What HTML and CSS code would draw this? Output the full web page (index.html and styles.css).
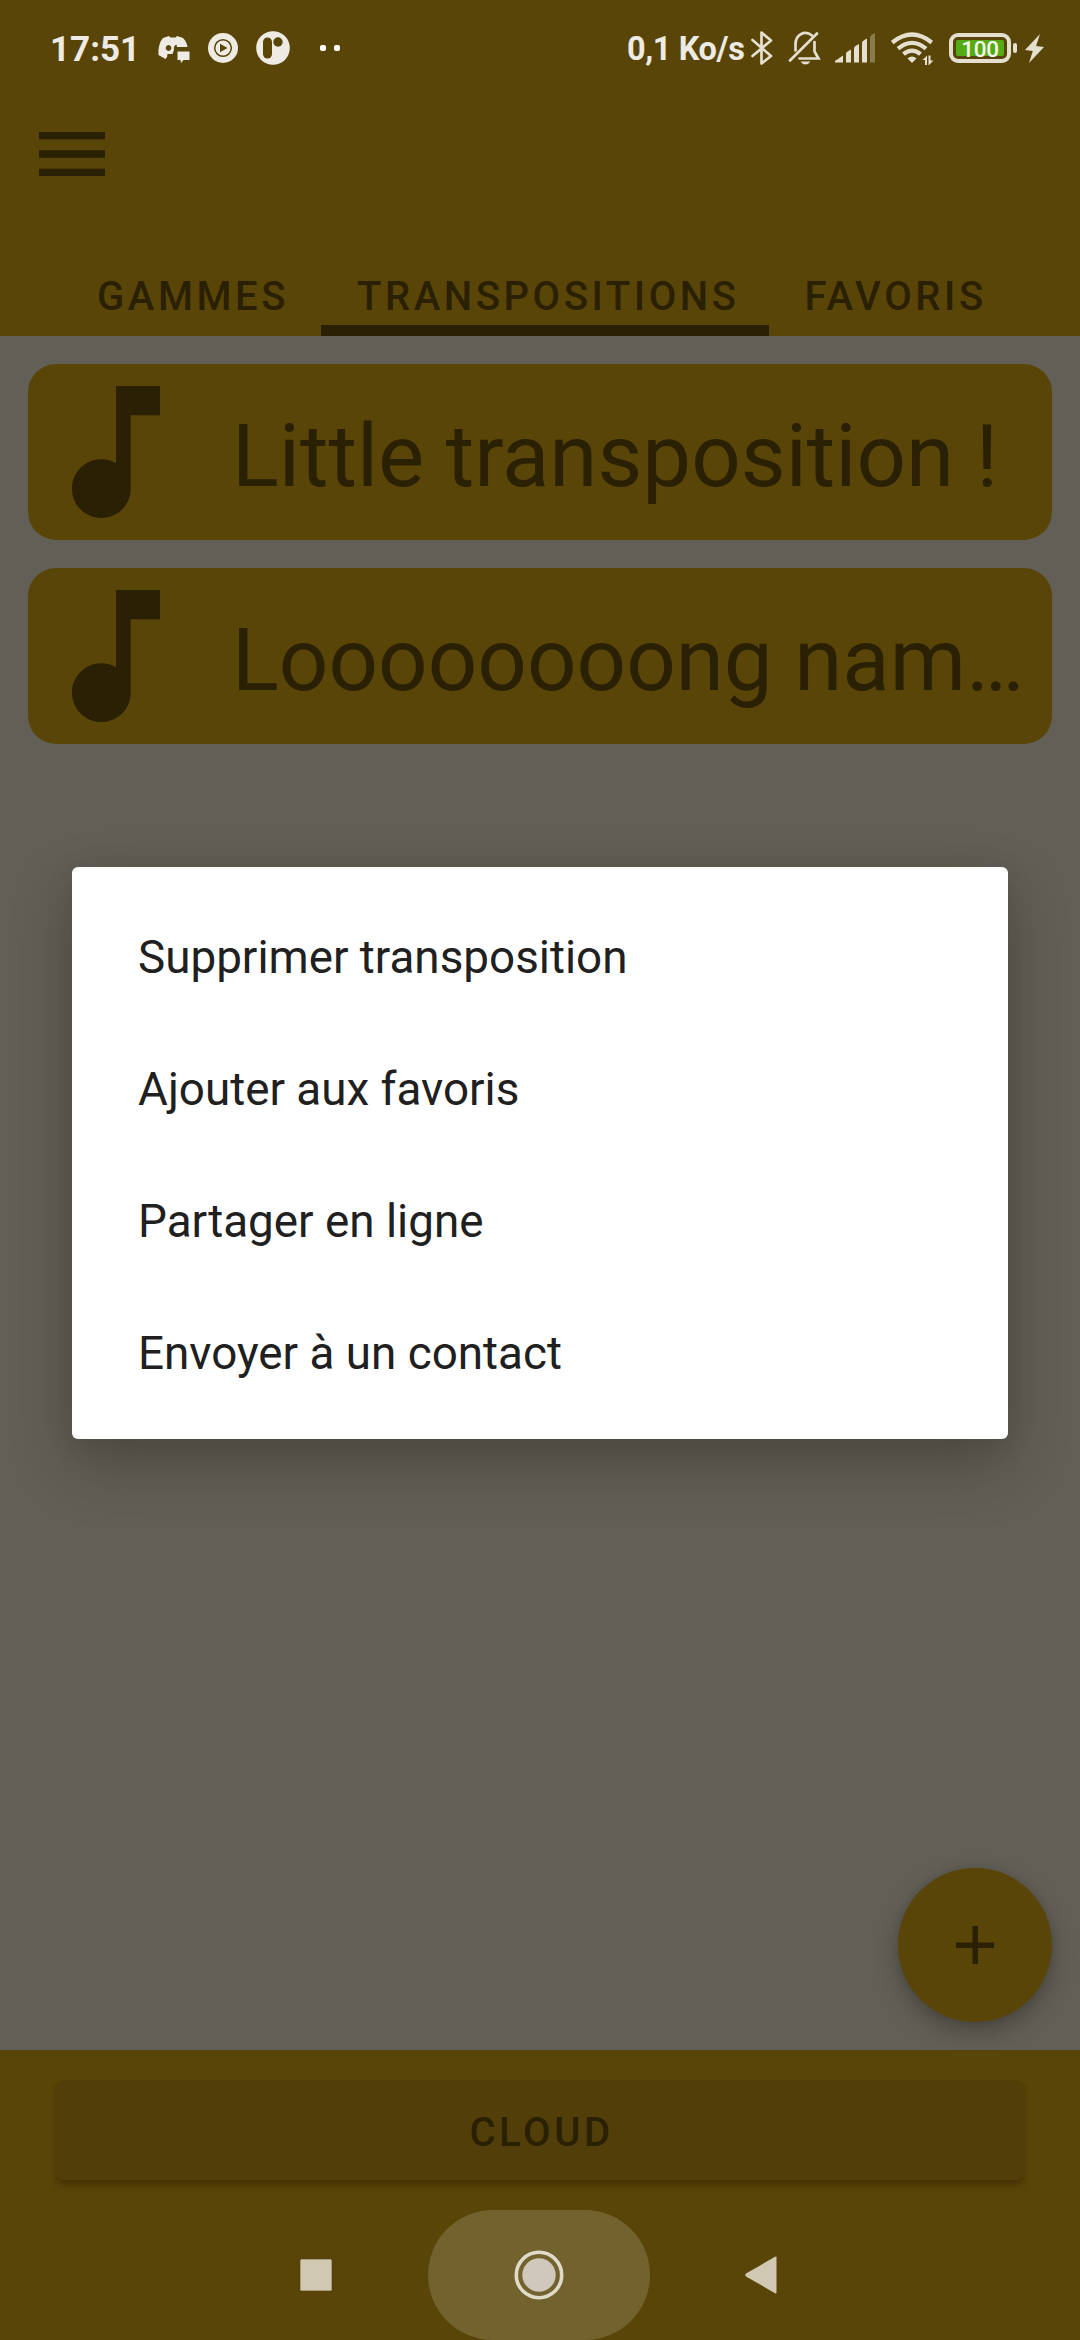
FILE: index.html
```html
<!DOCTYPE html>
<html lang="fr">
<head>
<meta charset="utf-8">
<title>Transpositions</title>
<link rel="stylesheet" href="styles.css">
</head>
<body>
<div class="screen">
  <header class="header">
    <div class="status">
      <span class="clock">17:51</span>
      <svg class="ic-discord" width="32" height="28" viewBox="0 0 32 28">
        <path fill="currentColor" fill-rule="evenodd" d="M5 3 L11 1 L12.500 2.500 H17.500 L19 1 L25 3 C28 6 29 9 29.500 12 H19 L18.500 9.500 C16.500 10 15.500 12 16 15 L14.500 19 H9.500 L9 22 L7.500 24 L0.500 20 C0 13 1.500 7 5 3 Z M10.500 10 a2.800 3 0 1 0 .1 0 Z"/>
        <path fill="currentColor" d="M19.500 16.500 H31.500 V25 H25.500 L23 28 L22.500 25 H19.500 Z"/>
      </svg>
      <svg class="ic-music" width="30" height="30" viewBox="0 0 30 30">
        <circle cx="15" cy="15" r="15" fill="currentColor"/>
        <circle cx="15" cy="15" r="8.300" fill="none" stroke="#5a4508" stroke-width="1.500"/>
        <path fill="#5a4508" d="M12 10.700 L19.500 15 L12 19.300 Z"/>
      </svg>
      <svg class="ic-app" width="34" height="34" viewBox="0 0 34 34">
        <circle cx="17" cy="17" r="16.800" fill="currentColor"/>
        <rect x="7" y="6.500" width="9" height="21" rx="4.500" fill="#5a4508"/>
        <circle cx="22" cy="11" r="4.700" fill="#5a4508"/>
      </svg>
      <span class="dots"><i></i><i></i></span>
      <span class="rate">0,1 Ko/s</span>
      <svg class="ic-bt" width="22" height="34" viewBox="0 0 22 34">
        <path fill="none" stroke="currentColor" stroke-width="2.700" stroke-linejoin="round" stroke-linecap="round" d="M1.500 9 L20 25 L10.500 32.500 V1.500 L20 9.500 L1.500 25"/>
      </svg>
      <svg class="ic-bell" width="33" height="34" viewBox="0 0 33 34">
        <g fill="none" stroke="currentColor" stroke-width="2.700" stroke-linecap="round">
          <path d="M2 29.500 L29 2.500"/>
          <path d="M7.500 19.500 V13.500 C7.500 3 17 -1 24 4.500"/>
          <path d="M26.500 11 V20.500 L30.500 27.500 H11.500"/>
        </g>
        <path fill="currentColor" d="M12.500 30.500 H22.500 Q20.500 33.500 17.500 33.500 T12.500 30.500 Z"/>
      </svg>
      <svg class="ic-signal" width="41" height="30" viewBox="0 0 41 30">
        <g fill="currentColor">
          <path d="M0 29.500 V28 L8 22.500 V29.500 Z"/>
          <path d="M11 29.500 V20.500 Q11 19 16 16.500 V29.500 Z"/>
          <path d="M19 29.500 V15 Q19 13.500 24 11 V29.500 Z"/>
          <path d="M27 29.500 V9.500 Q27 8 32 5.500 V29.500 Z"/>
          <path opacity=".35" d="M35 29.500 V4 Q35 2.500 40 0 V29.500 Z"/>
        </g>
      </svg>
      <svg class="ic-wifi" width="43" height="34" viewBox="0 0 43 34">
        <g fill="none" stroke="currentColor" stroke-width="4.200">
          <path d="M1.300 10.500 Q21 -5.500 40.700 10.500"/>
          <path d="M7 16.700 Q21 5 35 16.700"/>
          <path d="M12.500 22.200 Q21 15 29.500 22.200"/>
        </g>
        <path fill="currentColor" d="M16.500 26.500 Q21 22.500 25.500 26.500 L21 31 Z"/>
        <path fill="currentColor" d="M31.500 28 L36 23.500 V33 H34 V28 Z M37.500 23.500 H39.500 V28.500 H42.500 L37.500 33.500 Z"/>
      </svg>
      <span class="battery"><span class="level">100</span></span>
      <span class="cap"></span>
      <svg class="ic-bolt" width="19" height="29" viewBox="0 0 19 29">
        <path fill="currentColor" d="M15 0 L0 16 L7.800 17 L4 29 L19 13 L11 12 Z"/>
      </svg>
    </div>
    <div class="toolbar">
      <svg width="66" height="44" viewBox="0 0 66 44"><path fill="currentColor" d="M0 0H66V7.300H0Z M0 18.300H66V25.700H0Z M0 36.700H66V44H0Z"/></svg>
    </div>
    <nav class="tabs">
      <span class="tab">GAMMES</span>
      <span class="tab active">TRANSPOSITIONS</span>
      <span class="tab last">FAVORIS</span>
    </nav>
  </header>
  <main class="list">
    <div class="card">
      <svg class="note" viewBox="0 0 24 24"><path fill="currentColor" d="M12 3v10.550c-.59-.34-1.270-.55-2-.55-2.210 0-4 1.790-4 4s1.790 4 4 4 4-1.790 4-4V7h4V3h-6z"/></svg>
      <span class="name">Little transposition !</span>
    </div>
    <div class="card">
      <svg class="note" viewBox="0 0 24 24"><path fill="currentColor" d="M12 3v10.550c-.59-.34-1.270-.55-2-.55-2.210 0-4 1.790-4 4s1.790 4 4 4 4-1.790 4-4V7h4V3h-6z"/></svg>
      <span class="name">Loooooooong nam…</span>
    </div>
    <div class="fab"><svg width="38.500" height="38.500" viewBox="0 0 14 14"><path fill="currentColor" d="M14 8H8v6H6V8H0V6h6V0h2v6h6v2z"/></svg></div>
  </main>
  <footer class="footer">
    <div class="cloud">CLOUD</div>
    <div class="nav">
      <svg class="recent" width="34" height="34" viewBox="0 0 34 34"><rect x="1" y="1" width="32" height="32" rx="1.500" fill="currentColor" stroke="#4b3a08" stroke-width=".6"/></svg>
      <div class="home"><svg width="50" height="50" viewBox="0 0 50 50"><circle cx="25" cy="25" r="22.700" fill="none" stroke="#e0dac8" stroke-width="3.600"/><circle cx="25" cy="25" r="16.700" fill="#d0c8ba"/></svg></div>
      <svg class="back" width="32" height="38" viewBox="0 0 32 38"><path fill="currentColor" d="M30 .8 Q31.500 0 31.500 1.500 V36.500 Q31.500 38 30 37.200 L1 20.500 Q-.5 19 1 17.500 Z"/></svg>
    </div>
  </footer>
  <div class="dialog">
    <div class="option"><span>Supprimer transposition</span></div>
    <div class="option"><span>Ajouter aux favoris</span></div>
    <div class="option"><span>Partager en ligne</span></div>
    <div class="option"><span>Envoyer à un contact</span></div>
  </div>
</div>
</body>
</html>
```
FILE: styles.css
```css
* { box-sizing: border-box; }
body { margin: 0; font-family: Roboto, "Liberation Sans", sans-serif; }
svg { display: block; flex: none; }
.screen {
  position: relative;
  width: 1080px;
  height: 2340px;
  display: flex;
  flex-direction: column;
  overflow: hidden;
  background: #625f57;
  color: #2a2004;
}
.header {
  height: 336px;
  background: #5a4508;
  display: flex;
  flex-direction: column;
}
.status {
  height: 132px;
  display: flex;
  align-items: flex-start;
  color: #e4dfcf;
  white-space: nowrap;
}
.clock {
  width: 158px;
  padding: 29px 0 0 50px;
  font-size: 35px;
  line-height: 41px;
  font-weight: 700;
  flex: none;
  color: #edebe3;
}
.ic-discord { margin-top: 35px; color: #edebe3; }
.ic-music { margin: 33px 0 0 18px; color: #edebe3; }
.ic-app { margin: 31px 0 0 18px; color: #edebe3; }
.dots { display: flex; gap: 8px; margin: 45px 0 0 30px; flex: none; }
.dots i { width: 6px; height: 6px; border-radius: 2px; background: #fff; }
.rate {
  width: 124px;
  margin-left: 287px;
  padding-top: 29px;
  font-size: 32.500px;
  line-height: 40px;
  letter-spacing: -.4px;
  font-weight: 700;
  flex: none;
  color: #edebe3;
}
.ic-bt { margin: 31px 0 0 0; }
.ic-bell { margin: 31px 0 0 15px; }
.ic-signal { margin: 33px 0 0 14px; }
.ic-wifi { margin: 32px 0 0 15px; }
.battery {
  width: 62px;
  height: 30px;
  margin: 33px 0 0 15px;
  border: 4px solid #e4dfcf;
  border-radius: 9px;
  padding: 3px;
  flex: none;
}
.level {
  display: block;
  height: 16px;
  border-radius: 2px;
  background: #56ab14;
  color: #f4f8ec;
  font-size: 22.500px;
  font-weight: 500;
  line-height: 19px;
  letter-spacing: -.3px;
  text-align: center;
}
.cap { width: 4px; height: 10px; margin: 43px 0 0 2px; border-radius: 2px; background: #e4dfcf; flex: none; }
.ic-bolt { margin: 34px 0 0 8px; }
.toolbar { height: 127px; padding-left: 39px; }
.tabs {
  height: 77px;
  padding-left: 63px;
  display: grid;
  grid-template-columns: 258px 448px 1fr;
}
.tab {
  padding: 16px 0 0 34px;
  font-size: 40px;
  line-height: 44px;
  font-weight: 500;
  letter-spacing: 3.570px;
  white-space: nowrap;
}
.active { border-bottom: 11px solid #2a2004; padding-left: 36px; }
.last { padding-left: 35.500px; }
.list {
  height: 1714px;
  padding: 28px;
  display: flex;
  flex-direction: column;
  gap: 28px;
  position: relative;
}
.card {
  height: 176px;
  border-radius: 28px;
  background: #5a4508;
  display: flex;
  align-items: center;
  white-space: nowrap;
}
.note { width: 176px; height: 176px; }
.name { margin-left: 28px; padding-top: 8px; font-size: 87px; line-height: 104px; }
.fab {
  width: 154px;
  height: 154px;
  margin: auto 0 0 auto;
  border-radius: 50%;
  background: #5a4508;
  display: flex;
  align-items: center;
  justify-content: center;
  box-shadow: 0 10px 22px rgba(40, 38, 30, .42), 0 0 6px rgba(40, 38, 30, .15);
}
.footer {
  height: 290px;
  padding-top: 30px;
  background: #5a4508;
  display: flex;
  flex-direction: column;
  position: relative;
}
.cloud {
  height: 100px;
  margin: 0 55px;
  padding-left: 3px;
  border-radius: 9px;
  background: #523e08;
  box-shadow: 0 7px 7px -2px rgba(50, 30, 4, .5);
  text-align: center;
  font-size: 40px;
  font-weight: 500;
  line-height: 106px;
  letter-spacing: 3.570px;
}
.nav {
  height: 130px;
  margin-top: 30px;
  display: flex;
  align-items: center;
  color: #d1c8b2;
}
.recent { margin-left: 299px; }
.home {
  width: 222px;
  height: 130px;
  margin: 0 95px;
  border-radius: 65px;
  background: #72622e;
  display: flex;
  align-items: center;
  justify-content: center;
}
.dialog {
  position: absolute;
  left: 72px;
  top: 867px;
  width: 936px;
  height: 572px;
  padding: 22px 66px;
  border-radius: 6px;
  background: #fff;
  color: #202020;
  box-shadow: 0 26px 60px rgba(30, 28, 18, .3), 0 4px 30px rgba(30, 28, 18, .08);
}
.option {
  height: 132px;
  display: flex;
  align-items: center;
  font-size: 45.800px;
  padding-top: 5px;
  white-space: nowrap;
}
```
